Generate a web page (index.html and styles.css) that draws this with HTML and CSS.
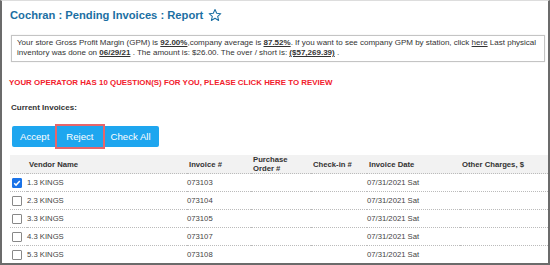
FILE: index.html
```html
<!DOCTYPE html>
<html lang="en">
<head>
    <meta charset="UTF-8">
    <title>Cochran : Pending Invoices : Report</title>
    <link rel="stylesheet" href="styles.css">
</head>
<body>
    <div class="frame">
        <h1 class="page-title">Cochran : Pending Invoices : Report
            <svg class="star" width="14" height="14" viewBox="0 0 24 24"><path d="M12 2.5l2.9 6.6 7.1.6-5.4 4.7 1.6 7-6.2-3.7-6.2 3.7 1.6-7L2 9.7l7.1-.6z" fill="none" stroke="#1b6fa3" stroke-width="1.8" stroke-linejoin="round"/></svg>
        </h1>

        <div class="gpm-box">
            Your store Gross Profit Margin (GPM) is <b class="u">92.00%</b>,company average is <b class="u">87.52%</b>. If you want to see company GPM by station, click <a href="#">here</a> Last physical<br>
            inventory was done on <b class="u">06/29/21</b> . The amount is: $26.00. The over / short is: <b class="u">($57,269.39)</b> .
        </div>

        <div class="operator-msg">YOUR OPERATOR HAS 10 QUESTION(S) FOR YOU, PLEASE CLICK HERE TO REVIEW</div>

        <div class="section-label">Current Invoices:</div>

        <div class="controls">
            <button>Accept</button>
            <button class="highlight">Reject</button>
            <button>Check All</button>
        </div>

        <table class="invoices">
            <colgroup>
                <col class="c-check">
                <col class="c-vendor">
                <col class="c-inv">
                <col class="c-po">
                <col class="c-chk">
                <col class="c-date">
                <col>
            </colgroup>
            <thead>
                <tr>
                    <th></th>
                    <th>Vendor Name</th>
                    <th>Invoice #</th>
                    <th>Purchase<br>Order #</th>
                    <th>Check-in #</th>
                    <th>Invoice Date</th>
                    <th>Other Charges, $</th>
                </tr>
            </thead>
            <tbody>
                <tr><td><span class="box checked"><svg width="8" height="8" viewBox="0 0 10 10"><path d="M1.5 5.2l2.3 2.4 4.7-5.2" fill="none" stroke="#fff" stroke-width="1.8"/></svg></span></td><td>1.3 KINGS</td><td>073103</td><td></td><td></td><td>07/31/2021 Sat</td><td></td></tr>
                <tr><td><span class="box"></span></td><td>2.3 KINGS</td><td>073104</td><td></td><td></td><td>07/31/2021 Sat</td><td></td></tr>
                <tr><td><span class="box"></span></td><td>3.3 KINGS</td><td>073105</td><td></td><td></td><td>07/31/2021 Sat</td><td></td></tr>
                <tr><td><span class="box"></span></td><td>4.3 KINGS</td><td>073107</td><td></td><td></td><td>07/31/2021 Sat</td><td></td></tr>
                <tr><td><span class="box"></span></td><td>5.3 KINGS</td><td>073108</td><td></td><td></td><td>07/31/2021 Sat</td><td></td></tr>
            </tbody>
        </table>
    </div>
</body>
</html>
```

FILE: styles.css
```css
html, body {
    margin: 0;
    padding: 0;
    background: #fff;
}
body {
    font-family: "Liberation Sans", Arial, sans-serif;
    color: #333;
}
.frame {
    box-sizing: border-box;
    width: 550px;
    height: 265px;
    border: 2px solid #6b6b6b;
    border-top: 1px solid #ddd;
    padding: 0 0 0 8px;
    overflow: hidden;
}
.page-title {
    margin: 5px 0 0 0;
    font-size: 11.2px;
    font-weight: bold;
    color: #1b6fa3;
    display: flex;
    align-items: center;
    gap: 5px;
    height: 18px;
}
.star {
    display: block;
}
.gpm-box {
    margin: 11px 3px 0 1px;
    border: 1px solid #c4c4c4;
    box-shadow: 0 0 1px #ddd;
    padding: 2px 5px 3px;
    font-size: 8px;
    line-height: 10px;
    color: #333;
    white-space: nowrap;
}
.gpm-box .u, .gpm-box a {
    text-decoration: underline;
    color: #333;
}
.gpm-box a {
    font-weight: normal;
}
.operator-msg {
    margin-top: 15px;
    margin-left: -1px;
    font-size: 7.9px;
    line-height: 12px;
    font-weight: bold;
    color: #f2202c;
    height: 12px;
}
.section-label {
    margin-top: 13px;
    margin-left: 1px;
    font-size: 8px;
    line-height: 12px;
    font-weight: bold;
    color: #333;
    height: 12px;
}
.controls {
    display: flex;
    margin-top: 12px;
    padding-left: 2px;
    height: 21px;
}
button {
    font-family: inherit;
    background-color: #1ea6ef;
    color: #fff;
    border: none;
    font-size: 9.6px;
    padding: 0 8px;
    height: 21px;
    border-radius: 0;
}
button:first-child {
    border-radius: 2px 0 0 2px;
}
button:last-child {
    border-radius: 0 2px 2px 0;
}
button.highlight {
    outline: 2px solid #e8656a;
    outline-offset: 0;
    position: relative;
    padding: 0 9px;
}
.invoices {
    margin-top: 8px;
    border-collapse: collapse;
    table-layout: fixed;
    width: 538px;
    font-size: 7.7px;
    color: #444;
}
.invoices thead tr {
    background: #f2f2f2;
}
.invoices th {
    text-align: left;
    font-weight: bold;
    color: #333;
    height: 18px;
    padding: 0 0 0 2px;
    line-height: 9px;
    border-bottom: 1px dotted #bbb;
}
.invoices td {
    height: 17px;
    padding: 0;
    border-bottom: 1px dotted #bbb;
}
.c-check { width: 17px; }
.c-vendor { width: 160px; }
.c-inv { width: 64px; }
.c-po { width: 60px; }
.c-chk { width: 56px; }
.c-date { width: 93px; }
.box {
    display: block;
    box-sizing: border-box;
    width: 10px;
    height: 10px;
    margin-left: 2px;
    border: 1px solid #888;
    border-radius: 1px;
    background: #fff;
}
.box.checked {
    background: #1a73e8;
    border-color: #1a73e8;
    display: flex;
    align-items: center;
    justify-content: center;
}
.box svg {
    display: block;
}
```
